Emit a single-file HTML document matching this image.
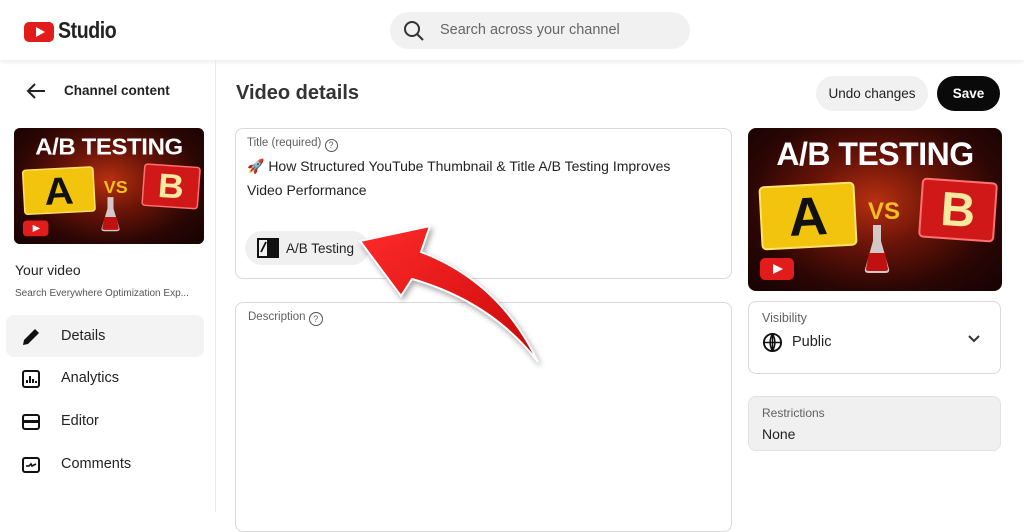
<!DOCTYPE html>
<html><head><meta charset="utf-8"><style>
*{margin:0;padding:0;box-sizing:border-box}
body{width:1024px;height:512px;overflow:hidden;background:#fff;font-family:"Liberation Sans",sans-serif;color:#0f0f0f;position:relative}
.abs{position:absolute}
.top{left:0;top:0;width:1024px;height:60px;background:#fff;box-shadow:0 2px 4px rgba(0,0,0,.08)}
.search{left:390px;top:12px;width:300px;height:37px;background:#f1f1f1;border-radius:19px}
.side{left:0;top:60px;width:216px;height:452px;border-right:1px solid #e8e8e8}
.thumb{width:254px;height:163px;border-radius:8px;overflow:hidden;background:radial-gradient(ellipse at 50% 45%,#b83010 0%,#6a1408 35%,#2a0604 70%,#150303 100%);position:absolute;transform-origin:0 0}
.thumb .t{position:absolute;left:0;width:254px;top:8px;text-align:center;color:#fff;font-weight:bold;font-size:32px;letter-spacing:-0.5px}
.thumb .a{position:absolute;left:12px;top:56px;width:96px;height:64px;background:#f2c40e;border:2px solid #ffe36a;border-radius:5px;transform:rotate(-3deg);font-weight:bold;font-size:54px;text-align:center;line-height:62px;color:#111}
.thumb .b{position:absolute;left:172px;top:52px;width:76px;height:60px;background:#d01818;border:2px solid #ff7070;border-radius:5px;transform:rotate(4deg);font-weight:bold;font-size:48px;text-align:center;line-height:58px;color:#f7e9a0}
.thumb .vs{position:absolute;left:120px;top:70px;color:#f0c020;font-weight:bold;font-size:24px}
.thumb .fl{position:absolute;left:116px;top:95px}
.thumb .yt{position:absolute;left:12px;top:130px;width:34px;height:22px;background:#e21b1b;border-radius:5px}
.thumb .yt:after{content:"";position:absolute;left:13px;top:6px;border-left:10px solid #fff;border-top:5px solid transparent;border-bottom:5px solid transparent}
.nav{left:6px;width:198px;height:42px;border-radius:8px;font-size:14.5px;color:#222}
.nav span{position:absolute;left:55px;top:13px}
.nav svg{position:absolute;left:14px;top:11px}
.box{border:1px solid #d9d9d9;border-radius:8px;position:absolute}
.lbl{font-size:12px;color:#606060}
</style></head><body>
<div class="abs top"></div>
<div class="abs" style="left:24px;top:22px;width:30px;height:20px;background:#e21b1b;border-radius:5px"></div>
<div class="abs" style="left:36px;top:27px;border-left:9px solid #fff;border-top:5px solid transparent;border-bottom:5px solid transparent"></div>
<div class="abs" style="left:58px;top:17px;font-size:23px;font-weight:bold;letter-spacing:-0.5px;color:#222;transform:scaleX(0.85);transform-origin:0 0">Studio</div>
<div class="abs search"></div>
<svg class="abs" style="left:403px;top:20px" width="22" height="22" viewBox="0 0 22 22"><circle cx="9" cy="9" r="7" fill="none" stroke="#333" stroke-width="2"/><line x1="14" y1="14" x2="20" y2="20" stroke="#333" stroke-width="2"/></svg>
<div class="abs" style="left:440px;top:22px;font-size:14.5px;color:#666">Search across your channel</div>

<div class="abs side"></div>
<svg class="abs" style="left:25px;top:82px" width="22" height="18" viewBox="0 0 22 18"><path d="M20 9H3M10 2L3 9l7 7" fill="none" stroke="#222" stroke-width="2"/></svg>
<div class="abs" style="left:64px;top:83px;font-size:13.5px;font-weight:bold;color:#222">Channel content</div>

<div class="thumb" style="left:14px;top:128px;transform:scale(0.748,0.712)">
<div class="t">A/B TESTING</div><div class="a">A</div><div class="vs">VS</div><div class="b">B</div>
<svg class="fl" width="26" height="52" viewBox="0 0 26 52"><path d="M9 2h8v16l8 28q1 4-4 4H5q-5 0-4-4l8-28z" fill="#ddd" opacity=".9"/><path d="M5 30h16l3 16q0 2-3 2H5q-3 0-3-2z" fill="#c01010"/></svg>
<div class="yt"></div></div>

<div class="abs" style="left:15px;top:262px;font-size:14px;color:#222">Your video</div>
<div class="abs" style="left:15px;top:288px;font-size:10px;color:#555">Search Everywhere Optimization Exp...</div>

<div class="abs nav" style="top:315px;background:#f3f3f3"><svg width="22" height="22" viewBox="0 0 22 22"><path d="M3 19l1-5L15 3l4 4L8 18z" fill="#111"/></svg><span>Details</span></div>
<div class="abs nav" style="top:357px"><svg width="22" height="22" viewBox="0 0 22 22"><rect x="3" y="3" width="16" height="16" rx="2" fill="none" stroke="#111" stroke-width="2"/><path d="M7 15v-3M10 15V8M13 15v-4M16 15v-2" stroke="#111" stroke-width="2"/></svg><span>Analytics</span></div>
<div class="abs nav" style="top:400px"><svg width="22" height="22" viewBox="0 0 22 22"><rect x="3" y="4" width="16" height="14" rx="2" fill="none" stroke="#111" stroke-width="2"/><rect x="4" y="9" width="14" height="3" fill="#111"/></svg><span>Editor</span></div>
<div class="abs nav" style="top:443px"><svg width="22" height="22" viewBox="0 0 22 22"><rect x="3" y="4" width="16" height="14" rx="2" fill="none" stroke="#111" stroke-width="2"/><path d="M6 12l3 0 2-2 1 2 4-2" fill="none" stroke="#111" stroke-width="1.6"/></svg><span>Comments</span></div>

<div class="abs" style="left:236px;top:82px;font-size:20px;font-weight:bold;color:#333">Video details</div>
<div class="abs" style="left:816px;top:76px;width:112px;height:35px;border-radius:18px;background:#f1f1f1;font-size:13.5px;text-align:center;line-height:35px;color:#222">Undo changes</div>
<div class="abs" style="left:937px;top:76px;width:63px;height:35px;border-radius:18px;background:#0a0a0a;color:#fff;font-size:13.5px;font-weight:bold;text-align:center;line-height:35px">Save</div>

<div class="box" style="left:235px;top:128px;width:497px;height:151px"></div>
<div class="abs lbl" style="left:247px;top:137px;font-size:11.5px">Title (required) <span style="display:inline-block;width:13px;height:13px;border:1.2px solid #555;border-radius:50%;font-size:9px;text-align:center;line-height:11px;vertical-align:-2px">?</span></div>
<div class="abs" style="left:247px;top:154px;font-size:14px;color:#222;line-height:24px">🚀 How Structured YouTube Thumbnail &amp; Title A/B Testing Improves<br>Video Performance</div>
<div class="abs" style="left:245px;top:231px;width:124px;height:34px;border-radius:17px;background:#f0f0f0"></div>
<svg class="abs" style="left:256px;top:237px" width="24" height="22" viewBox="0 0 24 22"><rect x="2" y="2" width="20" height="18" fill="none" stroke="#111" stroke-width="2"/><path d="M12 2v18" stroke="#111" stroke-width="2"/><path d="M12 2h10v18h-10z" fill="#111"/><path d="M5 15l5-10" stroke="#111" stroke-width="1.8"/></svg>
<div class="abs" style="left:286px;top:241px;font-size:13.5px;color:#222">A/B Testing</div>

<div class="box" style="left:235px;top:302px;width:497px;height:230px"></div>
<div class="abs lbl" style="left:248px;top:311px;font-size:11.5px">Description <span style="display:inline-block;width:14px;height:14px;border:1.2px solid #555;border-radius:50%;font-size:9px;text-align:center;line-height:12px;vertical-align:-2px">?</span></div>

<div class="thumb" style="left:748px;top:128px">
<div class="t">A/B TESTING</div><div class="a">A</div><div class="vs">VS</div><div class="b">B</div>
<svg class="fl" width="26" height="52" viewBox="0 0 26 52"><path d="M9 2h8v16l8 28q1 4-4 4H5q-5 0-4-4l8-28z" fill="#ddd" opacity=".9"/><path d="M5 30h16l3 16q0 2-3 2H5q-3 0-3-2z" fill="#c01010"/></svg>
<div class="yt"></div></div>

<div class="box" style="left:748px;top:301px;width:253px;height:73px"></div>
<div class="abs lbl" style="left:762px;top:311px;font-size:12.5px">Visibility</div>
<svg class="abs" style="left:762px;top:332px" width="21" height="21" viewBox="0 0 22 22"><circle cx="11" cy="11" r="9" fill="none" stroke="#111" stroke-width="2"/><path d="M2 11h18M11 2v18M11 2q-5 9 0 18M11 2q5 9 0 18" fill="none" stroke="#111" stroke-width="1.6"/></svg>
<div class="abs" style="left:792px;top:334px;font-size:14.5px;color:#222">Public</div>
<svg class="abs" style="left:967px;top:334px" width="14" height="10" viewBox="0 0 14 10"><path d="M2 2l5 5 5-5" fill="none" stroke="#333" stroke-width="2"/></svg>

<div class="abs" style="left:748px;top:396px;width:253px;height:55px;border-radius:8px;background:#f0f0f0;border:1px solid #e2e2e2"></div>
<div class="abs lbl" style="left:762px;top:406px;font-size:12px">Restrictions</div>
<div class="abs" style="left:762px;top:426px;font-size:14px;color:#222">None</div>

<svg class="abs" style="left:0;top:0" width="1024" height="512" viewBox="0 0 1024 512">
<defs><linearGradient id="g" x1="0" y1="0" x2="1" y2="1"><stop offset="0" stop-color="#ff2a2a"/><stop offset="1" stop-color="#c80808"/></linearGradient></defs>
<path d="M360,241 L430,226 L421,252 Q500,282 538,362 Q492,302 412,279 L401,296 Z" fill="url(#g)" stroke="#fff" stroke-width="2" style="filter:drop-shadow(2px 3px 3px rgba(0,0,0,.35))"/>
</svg>
</body></html>
